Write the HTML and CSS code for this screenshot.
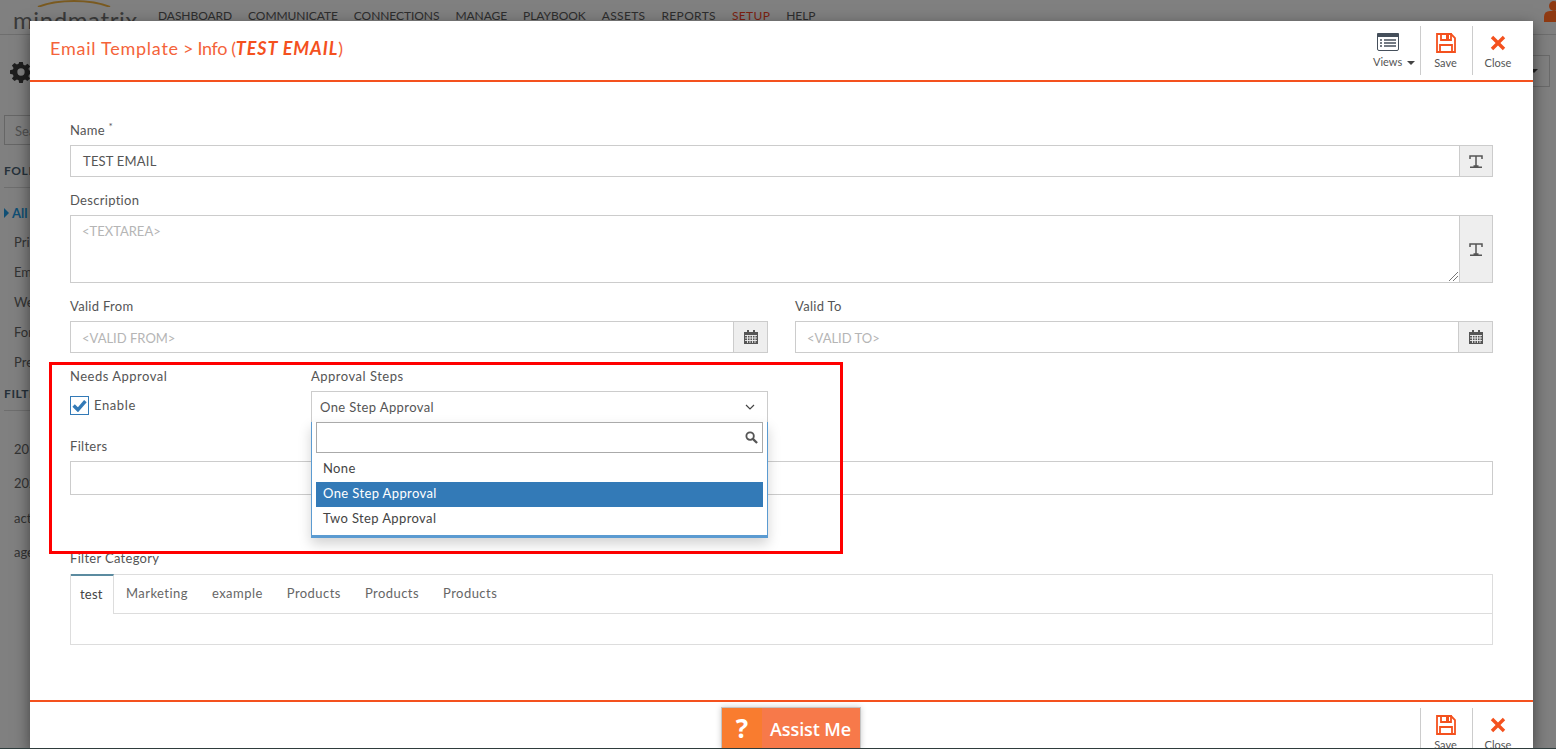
FILE: index.html
```html
<!DOCTYPE html>
<html lang="en">
<head>
<meta charset="utf-8">
<title>Email Template</title>
<link rel="stylesheet" href="styles.css">
</head>
<body>
<div class="page">
  <header class="topbar">
    <div class="logo"><svg class="logo-arc" viewBox="0 0 74 7" width="74" height="7"><path d="M1 7 C20 -1 54 -1 73 7" fill="none" stroke="#7a5a20" stroke-width="2"/></svg><span>mindmatrix</span></div>
    <nav class="mainnav">
      <a>DASHBOARD</a><a>COMMUNICATE</a><a>CONNECTIONS</a><a>MANAGE</a><a>PLAYBOOK</a><a class="wide">ASSETS</a><a class="wide">REPORTS</a><a class="wide current">SETUP</a><a>HELP</a>
    </nav>
    <svg class="user-icon" viewBox="0 0 12 22" width="12" height="22"><circle cx="10" cy="6" r="5" fill="#8f3a12"/><path d="M0 22 V17 Q0 11 6 11 H12 V22 Z" fill="#8f3a12"/></svg>
  </header>
  <aside class="sidebar">
    <svg class="gear" viewBox="0 0 24 24" width="22" height="22"><path fill="#1f1f1f" d="M10 1h4l.6 3.1 1.9.8 2.6-1.8 2.8 2.8-1.8 2.6.8 1.9L24 10v4l-3.1.6-.8 1.9 1.8 2.6-2.8 2.8-2.6-1.8-1.9.8L14 24h-4l-.6-3.1-1.9-.8-2.6 1.8-2.8-2.8 1.8-2.6-.8-1.9L0 14v-4l3.1-.6.8-1.9-1.8-2.6 2.8-2.8 2.6 1.8 1.9-.8zM12 8a4 4 0 1 0 0 8 4 4 0 0 0 0-8z"/></svg>
    <div class="side-search">Search</div>
    <h4 class="side-head">FOLDERS</h4>
    <ul class="side-list">
      <li class="side-active"><i class="side-arrow"></i>All</li><li>Print</li><li>Email</li><li>Web</li><li>Forms</li><li>Presentations</li>
    </ul>
    <h4 class="side-head side-head-filter">FILTERS</h4>
    <ul class="side-filters">
      <li>2019</li><li>2020</li><li>active</li><li>agenda</li>
    </ul>
  </aside>
  <div class="side-dropdown"><i class="side-caret"></i></div>

  <section class="modal">
    <div class="modal-header">
      <h1 class="modal-title"><span class="title-main">Email Template</span><span class="title-rest"> &gt; Info (</span><em>TEST EMAIL</em>)</h1>
      <div class="actions">
        <div class="action action-views">
          <svg viewBox="0 0 22 18" width="22" height="18"><rect x="0.5" y="0.5" width="21" height="17" rx="1.5" fill="#fff" stroke="#454f5b"/><rect x="0" y="0" width="22" height="4" rx="1" fill="#454f5b"/><path d="M3 7h2M7 7h12M3 10h2M7 10h12M3 13h2M7 13h12" stroke="#454f5b" stroke-width="1.4"/></svg>
          <span>Views <i class="caret"></i></span>
        </div>
        <div class="action">
          <svg viewBox="0 0 20 20" width="20" height="20"><path d="M1 1h14l4 4v14H1z" fill="none" stroke="#f4511e" stroke-width="1.8"/><path d="M5 1h10v6H5z" fill="none" stroke="#f4511e" stroke-width="1.8"/><rect x="10" y="2" width="3" height="4" fill="#f4511e"/><path d="M4 19v-7h12v7" fill="none" stroke="#f4511e" stroke-width="1.8"/></svg>
          <span>Save</span>
        </div>
        <div class="action action-close">
          <svg viewBox="0 0 16 16" width="16" height="16"><path d="M3.2 0.8 8 5.6l4.8-4.8 2.4 2.4L10.400 8l4.800 4.800-2.400 2.400L8 10.400l-4.800 4.800-2.400-2.400L5.600 8 .8 3.200z" fill="#f4511e"/></svg>
          <span>Close</span>
        </div>
      </div>
    </div>

    <div class="modal-body">
      <label class="lbl">Name <sup class="req">*</sup></label>
      <div class="input-group">
        <div class="control control-text">TEST EMAIL</div>
        <div class="addon addon-t"><svg class="t-icon" viewBox="0 0 14 13" width="14" height="13"><path d="M1 4V1h12v3M7 1v10M4.500 11h5M1 12.300h12" fill="none" stroke="#555" stroke-width="1.500"/></svg></div>
      </div>

      <label class="lbl">Description</label>
      <div class="input-group group-area">
        <div class="control control-area placeholder">&lt;TEXTAREA&gt;
          <svg class="resize" viewBox="0 0 9 9" width="9" height="9"><path d="M0 9 9 0M4 9l5-5" stroke="#777" stroke-width="1"/></svg>
        </div>
        <div class="addon addon-t"><svg class="t-icon" viewBox="0 0 14 13" width="14" height="13"><path d="M1 4V1h12v3M7 1v10M4.500 11h5M1 12.300h12" fill="none" stroke="#555" stroke-width="1.500"/></svg></div>
      </div>

      <div class="two-col">
        <div>
          <label class="lbl">Valid From</label>
          <div class="input-group group-last">
            <div class="control placeholder">&lt;VALID FROM&gt;</div>
            <div class="addon"><svg viewBox="0 0 14 14" width="14" height="14"><path fill="#555" d="M3 0h2v2h4V0h2v2h3v12H0V2h3z"/><path d="M1 5.500h12M1 8h12M1 10.500h12M3.500 5v8M6 5v8M8.500 5v8M11 5v8" stroke="#eee" stroke-width="0.900"/></svg></div>
          </div>
        </div>
        <div>
          <label class="lbl">Valid To</label>
          <div class="input-group group-last">
            <div class="control placeholder">&lt;VALID TO&gt;</div>
            <div class="addon"><svg viewBox="0 0 14 14" width="14" height="14"><path fill="#555" d="M3 0h2v2h4V0h2v2h3v12H0V2h3z"/><path d="M1 5.500h12M1 8h12M1 10.500h12M3.500 5v8M6 5v8M8.500 5v8M11 5v8" stroke="#eee" stroke-width="0.900"/></svg></div>
          </div>
        </div>
      </div>

      <div class="approval-row">
        <div class="approval-left">
          <label class="lbl lbl-wide">Needs Approval</label>
          <div class="check-row">
            <span class="checkbox"><svg viewBox="0 0 14 12" width="15" height="13"><path d="M1.500 6 5.500 10 12.500 2" fill="none" stroke="#337ab7" stroke-width="3.200"/></svg></span>
            <span class="check-label">Enable</span>
          </div>
        </div>
        <div class="approval-right">
          <label class="lbl lbl-wide">Approval Steps</label>
          <div class="select">
            <span>One Step Approval</span>
            <svg viewBox="0 0 10 6" width="10" height="6"><path d="M1 1l4 4 4-4" fill="none" stroke="#444" stroke-width="1.200"/></svg>
            <div class="dropdown">
              <div class="dd-search"><svg viewBox="0 0 14 14" width="13" height="13"><circle cx="5.500" cy="5.500" r="4" fill="none" stroke="#555" stroke-width="2"/><path d="M8.500 8.500 13 13" stroke="#555" stroke-width="2.400"/></svg></div>
              <ul class="dd-list">
                <li>None</li>
                <li class="dd-selected">One Step Approval</li>
                <li>Two Step Approval</li>
              </ul>
            </div>
          </div>
        </div>
      </div>

      <label class="lbl">Filters</label>
      <div class="filters-input"></div>

      <label class="lbl">Filter Category</label>
      <div class="tabs">
        <ul class="tab-nav">
          <li class="tab-active">test</li><li>Marketing</li><li>example</li><li>Products</li><li>Products</li><li>Products</li>
        </ul>
        <div class="tab-pane"></div>
      </div>
    </div>

    <div class="modal-footer">
      <div class="actions">
        <div class="action">
          <svg viewBox="0 0 20 20" width="20" height="20"><path d="M1 1h14l4 4v14H1z" fill="none" stroke="#f4511e" stroke-width="1.800"/><path d="M5 1h10v6H5z" fill="none" stroke="#f4511e" stroke-width="1.800"/><rect x="10" y="2" width="3" height="4" fill="#f4511e"/><path d="M4 19v-7h12v7" fill="none" stroke="#f4511e" stroke-width="1.800"/></svg>
          <span>Save</span>
        </div>
        <div class="action action-close">
          <svg viewBox="0 0 16 16" width="16" height="16"><path d="M3.200 .8 8 5.600l4.800-4.800 2.400 2.400L10.400 8l4.800 4.800-2.400 2.400L8 10.400l-4.800 4.800-2.400-2.400L5.600 8 .8 3.200z" fill="#f4511e"/></svg>
          <span>Close</span>
        </div>
      </div>
    </div>
  </section>

  <div class="annotation"></div>
  <div class="assist"><span class="assist-q">?</span><span class="assist-text">Assist Me</span></div>
  <div class="bottom-strip"></div>
</div>
</body>
</html>
```

FILE: styles.css
```css
* { box-sizing: border-box; }
html, body { margin: 0; height: 100%; }
body { font-family: "Lato", "Liberation Sans", sans-serif; font-size: 13px; color: #555; overflow: hidden; }
ul { list-style: none; margin: 0; padding: 0; }
h1, h4 { margin: 0; }

.page { position: relative; width: 1556px; height: 749px; background: #808080; overflow: hidden; }

.topbar { height: 35px; border-bottom: 1px solid #6e6e6e; display: flex; align-items: flex-start; }
.logo { position: relative; width: 158px; padding: 5px 0 0 13px; font-size: 24px; line-height: 30px; color: #3a3a3a; letter-spacing: 0.6px; }
.logo-arc { position: absolute; left: 37px; top: 0; }
.mainnav { display: flex; gap: 16px; padding-top: 8px; font-size: 12px; line-height: 15px; color: #2d2d2d; letter-spacing: -.06px; }
.mainnav .wide { letter-spacing: .35px; }
.mainnav .current { color: #7c1f10; }
.user-icon { position: absolute; right: 0; top: 0; }

.sidebar { width: 30px; padding: 26px 0 0 4px; overflow: hidden; white-space: nowrap; color: #333; }
.gear { display: block; margin-left: 6px; }
.side-search { width: 90px; height: 30px; margin-top: 32px; border: 1px solid #666; padding: 7px 10px; color: #505050; }
.side-head { margin-top: 18px; height: 25px; width: 90px; font-size: 12px; color: #26313a; letter-spacing: .6px; border-bottom: 1px solid #6e6e6e; }
.side-list { margin-top: 16px; }
.side-list li { height: 30px; padding-left: 10px; line-height: 18px; }
.side-list .side-active { height: 29px; padding-left: 0; color: #0f4f75; font-weight: 700; display: flex; align-items: flex-start; gap: 3px; }
.side-arrow { width: 0; height: 0; margin-top: 4px; border: 5px solid transparent; border-left: 5px solid #0f4f75; border-right: 0; }
.side-head-filter { margin-top: 3px; }
.side-filters { margin-top: 28.500px; padding-left: 10px; }
.side-filters li { height: 34.500px; line-height: 18px; }
.side-dropdown { position: absolute; left: 1500px; top: 55px; width: 50px; height: 32px; border: 1px solid #6a6a6a; display: flex; align-items: center; justify-content: flex-end; padding-right: 11px; }
.side-caret { width: 0; height: 0; border: 4px solid transparent; border-top-color: #222; border-bottom: 0; }

.modal { position: absolute; left: 30px; top: 21px; width: 1503px; height: 728px; background: #fff; display: flex; flex-direction: column; box-shadow: 0 5px 15px rgba(0,0,0,.5); overflow: hidden; }

.modal-header { height: 61px; flex: none; border-bottom: 2px solid #f4511e; display: flex; justify-content: space-between; padding-left: 20px; }
.modal-title { font-size: 18px; font-weight: 400; line-height: 26px; padding-top: 14px; color: #f4633a; white-space: pre; }
.title-main { letter-spacing: .75px; }
.title-rest { letter-spacing: -.35px; }
.modal-title em { font-weight: 700; font-style: italic; color: #f4511e; letter-spacing: .9px; }

.actions { display: flex; padding-top: 5px; margin-right: 8px; }
.action { width: 52px; height: 49px; border-left: 1px solid #ccc; display: flex; flex-direction: column; align-items: center; padding: 7px 2px 0 0; font-size: 11px; line-height: 13px; color: #555; }
.action svg { height: 20px; margin-bottom: 3px; }
.action-close { width: 53px; }
.action-views { border-left: 0; width: 52px; padding: 6px 0 0 5px; align-items: flex-start; }
.action-views svg { margin: 0 0 3px 4px; }
.caret { display: inline-block; width: 0; height: 0; border: 4px solid transparent; border-top-color: #444; border-bottom: 0; margin-left: 2px; vertical-align: middle; }

.modal-body { flex: 1; padding: 40px 40px 0; }
.lbl { display: block; height: 23px; line-height: 16px; color: #555; letter-spacing: .3px; }
.lbl-wide { letter-spacing: .5px; }
.req { font-size: 10px; line-height: 0; }

.input-group { display: flex; height: 32px; margin-bottom: 15px; border: 1px solid #ccc; }
.group-area { height: 68px; }
.group-last { margin-bottom: 15px; }
.control { flex: 1; position: relative; padding: 7px 11px; line-height: 18px; color: #555; }
.control-text { padding: 6px 12px; letter-spacing: .2px; }
.control-area { padding-top: 6px; }
.placeholder { color: #b5b5b5; }
.resize { position: absolute; right: 1px; bottom: 1px; }
.addon { width: 34px; flex: none; background: #eee; border-left: 1px solid #ccc; display: flex; align-items: center; justify-content: center; }
.addon-t { width: 33px; }

.two-col { display: grid; grid-template-columns: 698px 698px; column-gap: 27px; }

.approval-row { display: flex; height: 70px; }
.approval-left { width: 241px; }
.approval-right { width: 457px; }
.check-row { display: flex; align-items: center; gap: 5px; margin-top: 5px; }
.checkbox { width: 19px; height: 19px; border: 1px solid #337ab7; display: flex; align-items: center; justify-content: center; }
.check-label { letter-spacing: .6px; margin-top: -1px; }

.select { position: relative; height: 32px; border: 1px solid #ccc; display: flex; align-items: center; justify-content: space-between; padding: 0 12px 0 8px; color: #555; letter-spacing: .4px; }
.dropdown { position: absolute; left: -1px; right: -1px; top: 30px; height: 116px; background: #fff; border: 1px solid #5b9bd1; border-top: 0; border-bottom-width: 3px; box-shadow: 0 6px 12px rgba(0,0,0,.175); z-index: 2; padding: 0 4px; }
.dd-search { height: 31px; border: 1px solid #aaa; display: flex; align-items: center; justify-content: flex-end; padding-right: 4px; }
.dd-list { padding-top: 4px; }
.dd-list li { height: 25px; line-height: 23px; padding-left: 7px; color: #444; letter-spacing: .38px; }
.dd-list .dd-selected { background: #337ab7; color: #fff; }

.filters-input { height: 34px; border: 1px solid #ccc; margin-bottom: 55px; }

.tabs { height: 71px; margin-top: 1px; border: 1px solid #ddd; }
.tab-nav { display: flex; height: 38px; position: relative; }
.tab-nav li { padding: 0 12px; line-height: 37px; color: #666; letter-spacing: .45px; }
.tab-nav .tab-active { width: 43px; padding: 0 9px; border-top: 2px solid #5b8ba0; border-right: 1px solid #ddd; background: #fff; color: #444; margin-top: -1px; height: 39px; letter-spacing: .2px; }
.tab-pane { border-top: 1px solid #ddd; margin-left: 42px; }

.modal-footer { height: 49px; flex: none; border-top: 2px solid #f4511e; display: flex; justify-content: flex-end; }
.modal-footer .actions { padding-top: 6px; }

.annotation { position: absolute; left: 49px; top: 362px; width: 794px; height: 192px; border: 3px solid #f00; pointer-events: none; }

.assist { position: absolute; left: 721px; top: 707px; width: 140px; height: 42px; display: flex; border: 1px solid #c4c4c4; border-bottom: 0; color: #fff; font-weight: 700; box-shadow: 0 0 6px rgba(0,0,0,.2); }
.assist-q { width: 40px; background: #f97c2f; text-align: center; font-size: 26px; line-height: 40px; font-family: "Open Sans", sans-serif; }
.assist-text { flex: 1; background: #f7794a; font-size: 18px; line-height: 42px; padding-left: 8px; font-family: "Open Sans", sans-serif; font-weight: 600; letter-spacing: -.1px; }

.bottom-strip { position: absolute; left: 0; right: 0; bottom: 0; height: 1px; background: #2f3d3d; }
```
